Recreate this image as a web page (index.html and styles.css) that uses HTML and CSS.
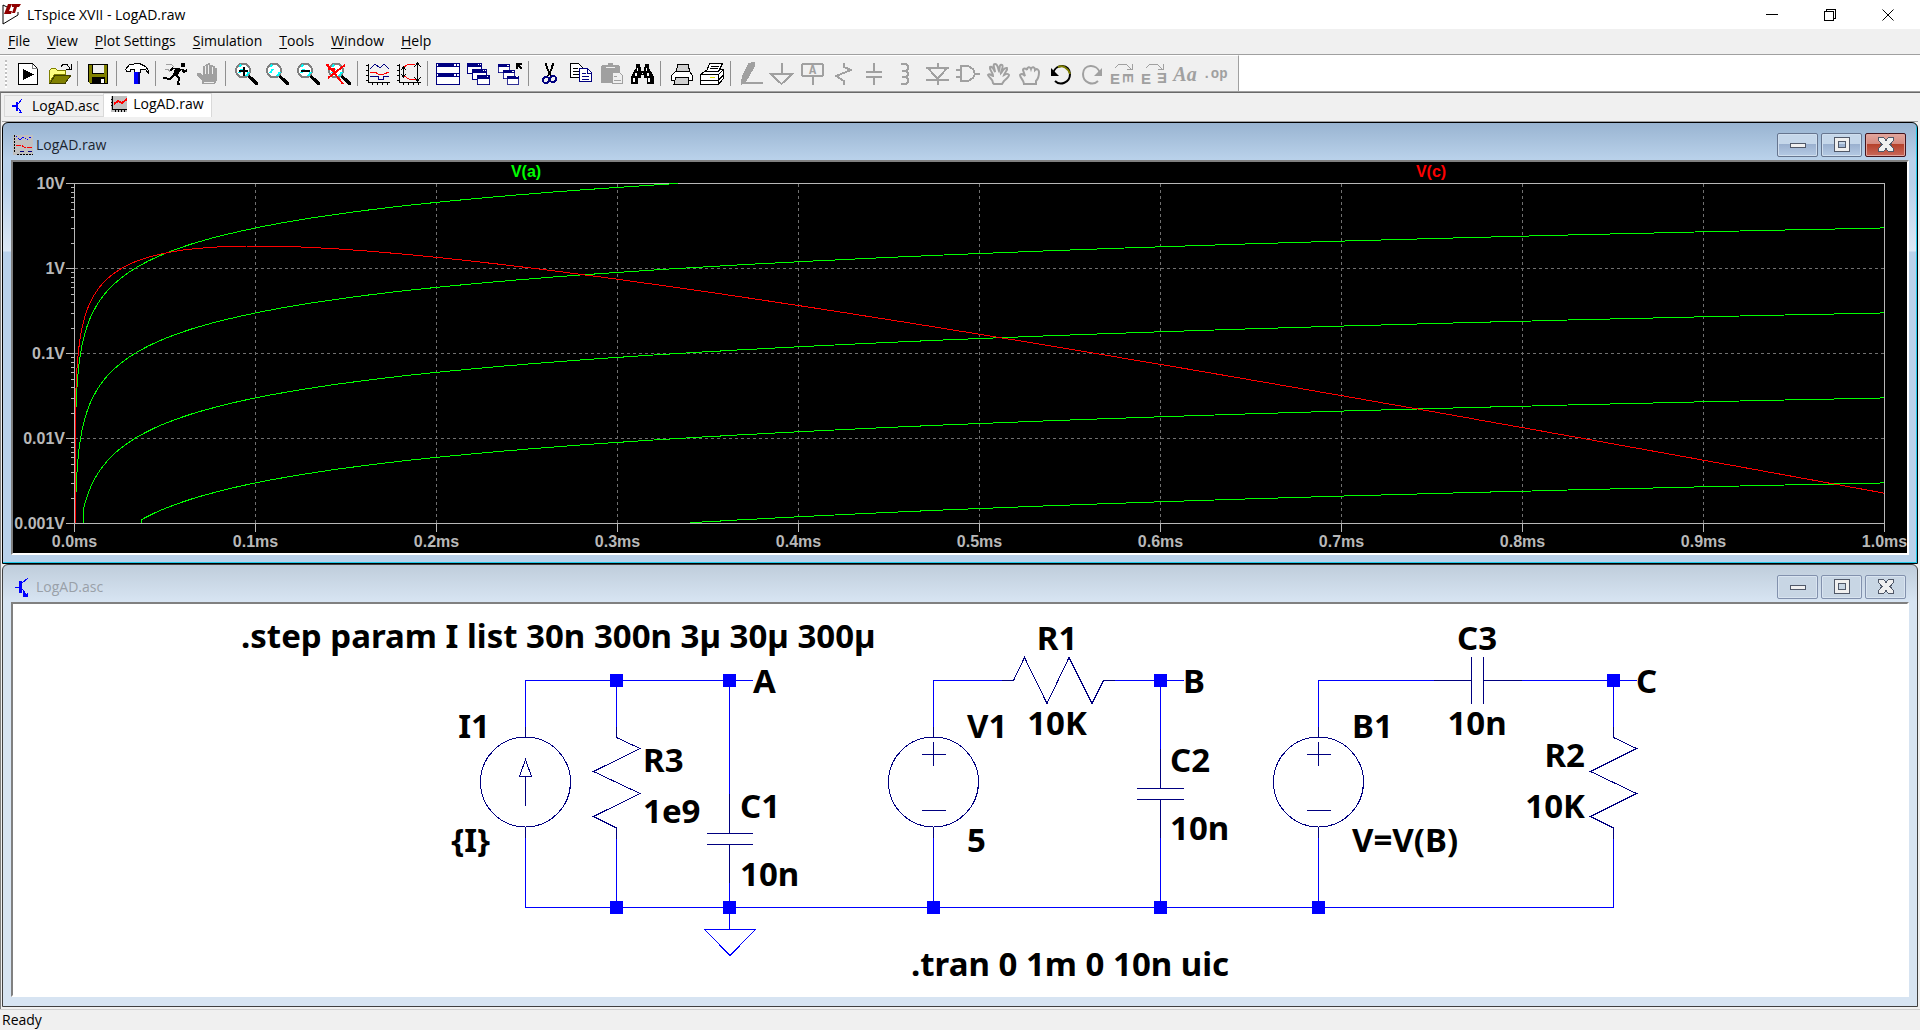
FILE: index.html
```
<!DOCTYPE html>
<html lang="en">
<head>
    <meta charset="UTF-8">
    <meta name="viewport" content="width=device-width, initial-scale=1.0">
    <title>LTspice XVII - LogAD.raw</title>
    <link rel="stylesheet" href="styles.css">
</head>
<body>
    <header class="titlebar">
        <svg class="app-icon" viewBox="0 0 20 21">
            <path d="M1 1v19l15-9v-3" fill="none" stroke="#000"/>
            <path d="M1 1l6 3" stroke="#000"/>
            <path d="M6 0h4l-3 7h3l-1 3H2zM10 0h9l-2 3h-2l-2 6h-3l2-6h-2z" fill="#900000"/>
        </svg>
        <h1>LTspice XVII - LogAD.raw</h1>
        <div class="caption">
            <button aria-label="Minimize"><svg viewBox="0 0 12 12"><path d="M0 5.5h12"/></svg></button>
            <button aria-label="Restore"><svg viewBox="0 0 12 12"><path d="M.5 2.5h9v9h-9zM2.5 2V.5h9v9H10"/></svg></button>
            <button aria-label="Close"><svg class="smooth" viewBox="0 0 12 12"><path d="M.5.5l11 11M11.5.5l-11 11"/></svg></button>
        </div>
    </header>

    <nav class="menu">
        <button><u>F</u>ile</button>
        <button><u>V</u>iew</button>
        <button><u>P</u>lot Settings</button>
        <button><u>S</u>imulation</button>
        <button><u>T</u>ools</button>
        <button><u>W</u>indow</button>
        <button><u>H</u>elp</button>
    </nav>

    <!-- shared icon parts -->
    <svg class="defs" aria-hidden="true">
        <symbol id="lens" viewBox="0 0 31 24">
            <path d="M17 13l2 1 7 6v2h-2l-7-7z" fill="#000" stroke="#000"/>
            <circle cx="12" cy="8.500" r="7" fill="#fff" stroke="#808080" stroke-width="2"/>
            <path d="M8 5l2-2M15 14l3-4M8 11l3-4" stroke="#0ff" stroke-width="2"/>
        </symbol>
        <symbol id="miniwin" viewBox="0 0 15 11">
            <path d="M.5.5h14v10H.5z" fill="#fff" stroke="#000080"/>
            <path d="M0 0h15v4H0z" fill="#000080"/>
            <path d="M11 1h1v1h-1zM13 1h1v1h-1z" fill="#fff"/>
        </symbol>
    </svg>

    <div class="toolbar-row">
        <div class="toolbar">
            <button aria-label="New schematic"><svg viewBox="0 0 31 24"><path d="M5.500 1.500h14l5 5v16h-19z" fill="#fff" stroke="#000"/><path d="M19.500 1.500v5h5" fill="none" stroke="#808080"/><path d="M10 7l11 5.500L10 18z"/></svg></button>
            <button aria-label="Open"><svg viewBox="0 0 31 24"><path d="M5.500 21V8.500l2-2h4l2 2h8V12h-11z" fill="#ffff80" stroke="#808000"/><path d="M6 21.500L11 13h16l-6 8.500z" fill="#808000" stroke="#404000"/><path d="M17 4.500l2-2h4l3 4M27 2v5h-5" fill="none" stroke="#000"/></svg></button>
            <span class="sep"></span>
            <button aria-label="Save"><svg viewBox="0 0 31 24"><path d="M5 2h20v20H7l-2-2z" fill="#000"/><path d="M6 3h3v9h12V3h3v18H6z" fill="#808000"/><path d="M10 3h11v8H10z" fill="#efefef"/><path d="M9 15h13v7H9z"/><path d="M18 17h3v4h-3z" fill="#fff"/></svg></button>
            <span class="sep"></span>
            <button aria-label="Control panel"><svg viewBox="0 0 31 24"><path d="M3.500 7.500l4-5 10-1 6 3 3 4v3l-3-4h-5v3h-6v-3H8v2H5z" fill="#fff" stroke="#000"/><path d="M12 10h6v12h-6z" fill="#00f"/><path d="M16 10h2v12h-2z" fill="#000080"/></svg></button>
            <span class="sep"></span>
            <button aria-label="Run"><svg viewBox="0 0 31 24"><path d="M20 1h4v4h-4z"/><path d="M11 6h5l5 1-5 7-4-2 2-5z"/><path d="M21 7l2 3 3-2M12 6l-3 3M14 12l4 4-1 6h2M13 13l-4 4-6-1v1" fill="none" stroke="#000" stroke-width="2"/><path d="M5 2h5l3 3M4 7h3l2 3" fill="none" stroke="#a0a0a0"/></svg></button>
            <button aria-label="Halt"><svg viewBox="0 0 31 24"><path d="M10 22v-3l-5-6v-2h3l3 3V4h2l1-2h2v-1h2v2h3v1h2v2h2v12l-2 4z" fill="#a0a0a0"/><path d="M13.500 4v8M16.500 3v9M20.500 5v7M12 20h10" stroke="#efefef"/></svg></button>
            <span class="sep"></span>
            <button aria-label="Zoom in"><svg viewBox="0 0 31 24"><use href="#lens"/><path d="M8 9h9M12.500 4.500v9" stroke="#000" stroke-width="2"/></svg></button>
            <button aria-label="Pan"><svg viewBox="0 0 31 24"><use href="#lens"/></svg></button>
            <button aria-label="Zoom out"><svg viewBox="0 0 31 24"><use href="#lens"/><path d="M8 9h9" stroke="#000" stroke-width="2"/></svg></button>
            <button aria-label="Zoom full extents"><svg viewBox="0 0 31 24"><use href="#lens"/><path d="M3 2l16 20M21 3L4 16" stroke="#f00" stroke-width="2"/><path d="M3 3l8 8M4 7h6v6" fill="none" stroke="#f00" stroke-width="2"/></svg></button>
            <span class="sep"></span>
            <button aria-label="Autorange"><svg viewBox="0 0 31 24"><path d="M5.500 2v18.500H27M3 3h2M3 8h2M3 13h2M3 18h2M9 20v3M14 20v3M19 20v3M24 20v3" fill="none" stroke="#000"/><path d="M7 7l5-5 5 4 4-4 5 5" fill="none" stroke="#000080"/><path d="M7 10h5l3 2h6l5-2" fill="none" stroke="#f00"/><path d="M7 14.500h8v3h5v-3h6" fill="none" stroke="#000080"/></svg></button>
            <button aria-label="Pick visible traces"><svg viewBox="0 0 31 24"><path d="M5.500 2v18.500H27M3 3h2M3 8h2M3 13h2M3 18h2M9 20v3M14 20v3M19 20v3M24 20v3M9.500 6v8M7 8l2.500-3L12 8M7 12l2.500 3 2.500-3M23.500 2v16M20 5l3.500-4L27 5M20 15l3.500 4 3.500-4" fill="none" stroke="#000"/><path d="M10 5l5-3h6M10 14l5 3 7 1" fill="none" stroke="#f00"/></svg></button>
            <span class="sep"></span>
            <button aria-label="Tile windows"><svg viewBox="0 0 31 24"><path d="M3.500 1.500h23v21h-23z" fill="#fff" stroke="#000080"/><path d="M3 1h24v4H3zM3 11h24v4H3z" fill="#000080"/><path d="M21 2h2v2h-2zM24 2h2v2h-2zM21 12h2v2h-2zM24 12h2v2h-2zM4 2h1v2H4zM4 12h1v2H4z" fill="#fff"/></svg></button>
            <button aria-label="Cascade windows"><svg viewBox="0 0 31 24"><use href="#miniwin" x="3" y="1" width="15" height="11"/><use href="#miniwin" x="8" y="7" width="15" height="11"/><use href="#miniwin" x="12" y="13" width="15" height="10"/></svg></button>
            <button aria-label="Close all windows"><svg viewBox="0 0 31 24"><use href="#miniwin" x="3" y="1" width="12" height="11"/><use href="#miniwin" x="8" y="7" width="12" height="11"/><use href="#miniwin" x="12" y="13" width="12" height="10"/><path d="M21.500 7V1.500H27M22 2l5 5" fill="none" stroke="#000" stroke-width="2"/></svg></button>
            <span class="sep"></span>
            <button aria-label="Cut"><svg viewBox="0 0 31 24"><path d="M12 1l1 5 4 8M19 1l-1 5-4 8" fill="none" stroke="#000" stroke-width="2"/><circle cx="12" cy="18" r="3" fill="none" stroke="#000080" stroke-width="2"/><circle cx="19" cy="17" r="3" fill="none" stroke="#000080" stroke-width="2"/></svg></button>
            <button aria-label="Copy"><svg viewBox="0 0 31 24"><path d="M5.500 1.500h8l4 4v10h-12z" fill="#fff" stroke="#000"/><path d="M8 6h5M8 9h7M8 12h7" stroke="#000"/><path d="M14.500 6.500h8l4 4v9h-12z" fill="#fff" stroke="#000080"/><path d="M17 11h4M17 14h7M17 17h7M22.500 7v4H26" fill="none" stroke="#000080"/></svg></button>
            <button aria-label="Paste" disabled><svg viewBox="0 0 31 24"><path d="M5 4l2-1h5V1h5v2h5l2 1v17H5z" fill="#a0a0a0"/><path d="M10 5.500h9" stroke="#efefef"/><path d="M16.500 10.500h7l3 3v8h-10z" fill="#efefef" stroke="#a0a0a0"/><path d="M18 14.500h3M18 18.500h7" stroke="#a0a0a0"/></svg></button>
            <button aria-label="Find"><svg viewBox="0 0 31 24"><path d="M9 2h4v3h1v4h3V5h1V2h4v4l3 5 2 4v7h-7v-6h-3v-3h-3v3h-3v6H4v-7l2-4 3-5z"/><path d="M10 6h1v3h-1zM19 6h1v3h-1zM8 11h2v3H8zM20 11h2v3h-2zM6 16h2v4H6zM21 16h2v4h-2zM15 11h1v1h-1z" fill="#fff"/></svg></button>
            <span class="sep"></span>
            <button aria-label="Print preview"><svg viewBox="0 0 31 24"><path d="M10.500 10.500l1-8h11l1 8z" fill="#d0d0d0" stroke="#000"/><path d="M5.500 13.500l4-4h14l3 4v5h-21z" fill="#fff" stroke="#000"/><path d="M9.500 15.500h13v7H8z" fill="#d0d0d0" stroke="#000"/></svg></button>
            <button aria-label="Print"><svg viewBox="0 0 31 24"><path d="M3.500 12.500l7-5h16v9l-5 6h-18z" fill="#fff" stroke="#000"/><path d="M3.500 12.500h18l5-5M21.500 12.500v10M4 18.500h17l5-5" fill="none" stroke="#000"/><path d="M9.500 9.500l3-8h13l-4 8z" fill="#fff" stroke="#000"/><path d="M14 4.500h8M13 6.500h8" stroke="#000"/><path d="M13 15.500h5" stroke="#e0e000"/></svg></button>
            <span class="sep"></span>
            <button aria-label="Wire" disabled><svg class="dim" viewBox="0 0 31 24"><path d="M13 2l5-1v3l-8 14-4 3 1-7z" fill="#a0a0a0"/><path d="M6 20.500h21"/></svg></button>
            <button aria-label="Ground" disabled><svg class="dim" viewBox="0 0 31 24"><path d="M14.500 1v10M4 12h21L14.500 22z"/></svg></button>
            <button aria-label="Label net" disabled><svg class="dim" viewBox="0 0 31 24"><path d="M5 2h19l1 1v10l-1 1H5l-1-1V3zM14.500 15v8"/><text x="14.500" y="12" class="ico-label">A</text></svg></button>
            <button aria-label="Resistor" disabled><svg class="dim" viewBox="0 0 31 24"><path d="M15 1v4l7 3L7 14l8 5v4"/></svg></button>
            <button aria-label="Capacitor" disabled><svg class="dim" viewBox="0 0 31 24"><path d="M14 1v8M6 10h16M6 15h16M14 15v8"/></svg></button>
            <button aria-label="Inductor" disabled><svg class="dim" viewBox="0 0 31 24"><path d="M10 2h5l2 2v3l-2 2h-4 4l2 2v2l-2 2h-4 4l2 2v3l-2 2h-5"/></svg></button>
            <button aria-label="Diode" disabled><svg class="dim" viewBox="0 0 31 24"><path d="M4 6h23M6 6l9.500 11L25 6M4 18h23M16 1v5M16 18v5"/></svg></button>
            <button aria-label="Component" disabled><svg class="dim" viewBox="0 0 31 24"><path d="M8 4h7l5 3 2 5-2 4-5 3H8zM3 8h5M3 15h5M22 12h5"/></svg></button>
            <button aria-label="Move" disabled><svg class="dim smooth" viewBox="0 0 31 24"><path d="M9 21c0-4-4-5-5-8 2-2 4 1 5 1 0-4-4-6-3-9 3-1 4 3 5 5 0-3-3-8 0-8s3 5 4 7c1-3 0-7 3-6 2 1-1 6-1 8 2-2 3-6 6-5 1 2-2 4-3 7 2-1 4-2 5 0 0 2-3 4-5 6l-2 3h-8z"/></svg></button>
            <button aria-label="Drag" disabled><svg class="dim smooth" viewBox="0 0 31 24"><path d="M9 22c0-4-4-6-4-9 1-2 3-1 5 1l-2-6c0-2 3-2 4 0 0-3 3-4 4-1 1-3 4-2 4 1 2-2 4 0 4 2 0 5-1 7-3 9v3z"/></svg></button>
            <button aria-label="Undo"><svg class="smooth" viewBox="0 0 31 24"><path d="M7 11C10 1 24 2 24 12c0 9-10 12-15 7" fill="none" stroke="#000" stroke-width="2"/><path d="M12 5c5-2 10 1 12 7" fill="none" stroke="#808000" stroke-width="2"/><path d="M5 6v8h8z"/></svg></button>
            <button aria-label="Redo" disabled><svg class="dim smooth" viewBox="0 0 31 24"><path d="M23 11C20 1 6 2 6 12c0 9 10 12 15 7"/><path d="M25 6v8h-8z" fill="#a0a0a0" stroke="none"/></svg></button>
            <button aria-label="Rotate" disabled><svg class="dim thin" viewBox="0 0 31 24"><path d="M7 6l4-4h7l5 5M19 7h5V2"/><text x="2" y="22" class="ico-e">E</text><text transform="translate(15 11) rotate(90)" class="ico-e">E</text></svg></button>
            <button aria-label="Mirror" disabled><svg class="dim thin" viewBox="0 0 31 24"><path d="M7 6l4-4h7l5 5M19 7h5V2"/><text x="2" y="22" class="ico-e">E</text><text transform="translate(28 11) rotate(180)" class="ico-e">E</text></svg></button>
            <button aria-label="Text" disabled><svg class="dim" viewBox="0 0 31 24"><text x="15" y="19" class="ico-aa">Aa</text></svg></button>
            <button aria-label="SPICE directive" disabled><svg class="dim" viewBox="0 0 31 24"><text x="14" y="16" class="ico-op">.op</text></svg></button>
        </div>
    </div>

    <main class="mdi">
        <div class="tabs">
            <button class="tab">
                <svg viewBox="0 0 16 16"><path d="M1 8h5" stroke="#00f" stroke-width="2"/><path d="M5 4h2v9H5z" fill="#00f"/><path d="M7 6l4-5M7 10l4 5M8 14h3" fill="none" stroke="#00f"/></svg>
                LogAD.asc
            </button>
            <button class="tab active">
                <svg viewBox="0 0 16 16"><path d="M0 0h16v16H0z" fill="#c0c0c0"/><path d="M1.500 0v13.500H16M4 14v2M7 14v2M10 14v2M13 14v2M0 3h1M0 6h1M0 9h1" fill="none" stroke="#000"/><path d="M3 8l4-3 4 2 5-4" fill="none" stroke="#f00" stroke-width="2"/></svg>
                LogAD.raw
            </button>
        </div>

        <section class="window focused">
            <div class="window-title">
                <svg viewBox="0 0 20 20"><path d="M0 0h20v20H0z" fill="#c0c0c0"/><path d="M1.500 0v17M4 19h16" fill="none" stroke="#000" stroke-dasharray="2 1"/><path d="M3 1l4 4 4-3 3 3 5-4" fill="none" stroke="#00f" stroke-dasharray="2 1"/><path d="M3 10h5l3 2h8" fill="none" stroke="#f00" stroke-dasharray="5 1"/><path d="M7 16h4M15 16h4" stroke="#000080"/></svg>
                <h2>LogAD.raw</h2>
                <button aria-label="Minimize"><svg viewBox="0 0 20 16"><path d="M2.500 6.500h15v4h-15z"/></svg></button>
                <button aria-label="Maximize"><svg viewBox="0 0 20 16"><path fill-rule="evenodd" d="M2.500.5h15v14h-15zM6.500 4.500v6h7v-6z"/></svg></button>
                <button class="close" aria-label="Close"><svg viewBox="0 0 20 16"><path d="M2.500.5h5l2.500 3 2.500-3h5v3L14 7.500l3.500 4v3h-5l-2.500-3-2.500 3h-5v-3L6 7.500l-3.500-4z"/></svg></button>
            </div>
            <div class="client">
                <!-- grid, traces and axis labels are filled in by plot.js -->
                <svg id="plot" class="plot" viewBox="13 162 1894 391"></svg>
            </div>
        </section>

        <section class="window">
            <div class="window-title">
                <svg viewBox="0 0 20 20"><path d="M2 10h5" stroke="#00f"/><path d="M6 4h3v12H6z" fill="#00f"/><path d="M9 6l6-5M9 12l3 3" fill="none" stroke="#00f"/><path d="M10 14l3 3 2-2v5h-5z" fill="#00f"/></svg>
                <h2>LogAD.asc</h2>
                <button aria-label="Minimize"><svg viewBox="0 0 20 16"><path d="M2.500 6.500h15v4h-15z"/></svg></button>
                <button aria-label="Maximize"><svg viewBox="0 0 20 16"><path fill-rule="evenodd" d="M2.500.5h15v14h-15zM6.500 4.500v6h7v-6z"/></svg></button>
                <button class="close" aria-label="Close"><svg viewBox="0 0 20 16"><path d="M2.500.5h5l2.500 3 2.500-3h5v3L14 7.500l3.500 4v3h-5l-2.500-3-2.500 3h-5v-3L6 7.500l-3.500-4z"/></svg></button>
            </div>
            <div class="client">
                <svg class="schematic" viewBox="13 604 1894 391">
                    <!-- wires -->
                    <g class="wire">
                        <path d="M525.500 727V680.500H753M616.500 680v47M729.500 680v130M525.500 838v69.500H1613.500V839M616.500 839v68M729.500 867v62.500M933.500 838v69M704.500 929.500h51l-25.500 26z"/>
                        <path d="M933.500 727V680.500H1002M1115 680.500h69M1160.500 680v86M1160.500 822v85"/>
                        <path d="M1318.500 727V680.500H1434M1521 680.500h116M1613.500 680v47M1318.500 838v69"/>
                    </g>
                    <!-- symbols -->
                    <g class="symbol">
                        <circle cx="525.500" cy="782" r="45"/>
                        <path d="M525.500 727v10M525.500 827v11M525.500 806V776.500M519.500 776.500h12l-6-17z"/>
                        <path d="M616.500 727v10.500l23.500 11-46.500 23 46.500 22-46.500 23 23 11.500v11"/>
                        <path d="M729.500 794v39.500M707 833.500h46M707 844.500h46M729.500 844.500V883"/>
                        <circle cx="933.500" cy="782" r="45"/>
                        <path d="M933.500 727v10M933.500 827v11M922 754.500h24M933.500 742v24M922 810.500h24"/>
                        <path d="M1002 680.500h11.500l11-23 22.500 46 22-46 23 46 11.500-23H1115"/>
                        <path d="M1160.500 749v39.500M1137 788.500h47M1137 799.500h47M1160.500 799.500V838"/>
                        <circle cx="1318.500" cy="782" r="45"/>
                        <path d="M1318.500 727v10M1318.500 827v11M1307 754.500h24M1318.500 742v24M1307 810.500h24"/>
                        <path d="M1434 680.500h37.500M1471.500 657v47M1483.500 657v47M1483.500 680.500H1522"/>
                        <path d="M1613.500 727v10.500l23 11-46 23 46 22-46 23 23 11.500v11"/>
                    </g>
                    <!-- junctions -->
                    <path class="junction" d="M610 674h13v13h-13zM723 674h13v13h-13zM1154 674h13v13h-13zM1607 674h13v13h-13zM610 901h13v13h-13zM723 901h13v13h-13zM927 901h13v13h-13zM1154 901h13v13h-13zM1312 901h13v13h-13z"/>
                    <text x="241" y="648">.step param I list 30n 300n 3µ 30µ 300µ</text>
                    <text x="911" y="976">.tran 0 1m 0 10n uic</text>
                    <text x="490" y="738" class="end">I1</text>
                    <text x="490" y="852" class="end">{I}</text>
                    <text x="643" y="772">R3</text>
                    <text x="643" y="823">1e9</text>
                    <text x="740" y="818">C1</text>
                    <text x="740" y="886">10n</text>
                    <text x="753" y="693">A</text>
                    <text x="967" y="738">V1</text>
                    <text x="967" y="852">5</text>
                    <text x="1057" y="650" class="mid">R1</text>
                    <text x="1057" y="735" class="mid">10K</text>
                    <text x="1183" y="693">B</text>
                    <text x="1170" y="772">C2</text>
                    <text x="1170" y="840">10n</text>
                    <text x="1352" y="738">B1</text>
                    <text x="1352" y="852">V=V(B)</text>
                    <text x="1477" y="650" class="mid">C3</text>
                    <text x="1477" y="735" class="mid">10n</text>
                    <text x="1585" y="767" class="end">R2</text>
                    <text x="1585" y="818" class="end">10K</text>
                    <text x="1636" y="693">C</text>
                </svg>
            </div>
        </section>
    </main>

    <footer class="status">Ready</footer>
    <script src="plot.js"></script>
</body>
</html>
```
FILE: styles.css
```
* {
    box-sizing: border-box;
}

body {
    margin: 0;
    min-height: 100vh;
    display: flex;
    flex-direction: column;
    background: #f0f0f0;
    color: #000;
    font-family: "Open Sans", sans-serif;
    font-size: 14px;
    line-height: 20px;
}

button {
    border: 0;
    padding: 0;
    margin: 0;
    background: none;
    color: inherit;
    font: inherit;
}

svg {
    display: block;
    shape-rendering: crispEdges;
}

.smooth {
    shape-rendering: auto;
}

.defs {
    position: absolute;
    width: 0;
    height: 0;
}

/* main title bar */
.titlebar {
    display: flex;
    align-items: center;
    height: 29px;
    padding-left: 2px;
    background: #fff;
}

.app-icon {
    width: 20px;
    height: 21px;
    shape-rendering: auto;
}

.titlebar h1 {
    flex: 1;
    margin: 0 0 0 5px;
    font-size: 14px;
    font-weight: normal;
}

.caption {
    display: flex;
    gap: 46px;
    padding-right: 26px;
}

.caption svg {
    width: 12px;
    height: 12px;
    fill: none;
    stroke: #000;
}

.menu {
    display: flex;
    gap: 17px;
    height: 25px;
    padding: 0 8px 2px;
}

.menu u {
    text-underline-offset: 2px;
}

/* toolbar */
.toolbar-row {
    border-top: 1px solid #a0a0a0;
    border-bottom: 1px solid #a0a0a0;
    background: #fff;
}

.toolbar {
    display: flex;
    align-items: center;
    width: fit-content;
    height: 36px;
    padding: 0 6px 0 5px;
    border-top: 1px solid #fff;
    border-right: 1px solid #a0a0a0;
    background: #f0f0f0;
}

.toolbar::before {
    content: "";
    width: 2px;
    height: 28px;
    margin-right: 6px;
    background: repeating-linear-gradient(#c0c0c0 0 2px, #fff 2px 4px);
}

.toolbar button svg {
    width: 31px;
    height: 24px;
}

.sep {
    width: 1px;
    height: 25px;
    margin: 0 5px 0 2px;
    background: #909090;
}

.dim {
    fill: none;
    stroke: #a0a0a0;
    stroke-width: 2;
}

.thin {
    stroke-width: 1;
}

.smooth.dim {
    stroke-width: 2;
}

.dim text {
    fill: #a0a0a0;
    stroke: none;
    font-weight: bold;
}

.ico-label {
    font-family: "Liberation Mono", monospace;
    font-size: 12px;
    text-anchor: middle;
}

.ico-e {
    font-family: "Liberation Sans", sans-serif;
    font-size: 15px;
}

.ico-aa {
    font-family: "Liberation Serif", serif;
    font-size: 20px;
    font-style: italic;
    text-anchor: middle;
}

.ico-op {
    font-family: "Liberation Mono", monospace;
    font-size: 14px;
    text-anchor: middle;
}

/* document area */
.mdi {
    flex: 1;
    padding: 0 2px 2px 1px;
    border-top: 1px solid #696969;
    border-left: 1px solid #808080;
}

.tabs {
    display: flex;
    align-items: flex-end;
    height: 29px;
    padding: 0 2px 4px;
    border-bottom: 1px solid #a0a0a0;
}

.tab {
    display: flex;
    align-items: center;
    gap: 5px;
    height: 22px;
    padding: 0 4px 0 6px;
    border: 1px solid #d9d9d9;
    border-right: 0;
    font-size: 14px;
}

.tab.active {
    gap: 6px;
    height: 24px;
    padding: 0 7px 4px 7px;
    border-right: 1px solid #d9d9d9;
    border-bottom: 0;
    background: #fff;
}

.tab svg {
    width: 16px;
    height: 16px;
}

/* child windows */
.window {
    padding: 2px 8px 9px;
    border: 1px solid #404040;
    border-radius: 6px 6px 0 0;
    background: linear-gradient(#bfcddb, #d7e4f2 36px);
    color: #99a0a8;
}

.window.focused {
    padding-bottom: 8px;
    border-color: #000;
    box-shadow: inset -1px -1px #20c8e8;
    background: linear-gradient(#99b4d1, #b9d1ea 36px, #b9d1ea 60px, #dce8f5 128px, #b9d1ea 129px);
    color: #1c2530;
}

.window-title {
    display: flex;
    align-items: center;
    gap: 3px;
    height: 35px;
    padding: 5px 3px 0 2px;
}

.window-title > svg {
    width: 20px;
    height: 20px;
}

.window-title h2 {
    flex: 1;
    margin: 0;
    font-size: 14px;
    font-weight: normal;
}

.window-title button {
    display: flex;
    align-items: center;
    justify-content: center;
    width: 41px;
    height: 24px;
    border: 1px solid #8291ad;
    border-radius: 2px;
    box-shadow: inset 0 0 0 1px #d9e4f0;
    background: #c8d6e4;
}

.focused .window-title button {
    border-color: #66758f;
    box-shadow: inset 0 0 0 1px #cfdeee;
    background: linear-gradient(#c5d7ea 0 45%, #9ab0cf 46%, #b5cae4);
}

.focused .window-title .close {
    border-color: #43131c;
    box-shadow: inset 0 0 0 1px #e0a49c;
    background: linear-gradient(#e2a69d 0, #d58a80 45%, #b5402a 46%, #c9685a);
}

.window-title button svg {
    width: 20px;
    height: 16px;
    fill: #f0f0f0;
    stroke: #505868;
}

.client {
    border: 2px solid;
    border-color: #808080 #fff #fff #808080;
}

.plot {
    width: 100%;
    background: #000;
}

.plot path {
    fill: none;
}

.plot text {
    fill: #b8b8b8;
    font: bold 16px "Liberation Sans", sans-serif;
    text-anchor: middle;
}

.plot .axis {
    stroke: #b8b8b8;
}

.plot .grid {
    stroke: #707070;
    stroke-dasharray: 3 3;
}

.plot .va {
    stroke: #0f0;
}

.plot .vc {
    stroke: #f00;
}

.plot .volts {
    text-anchor: end;
}

.plot .name-a {
    fill: #0f0;
}

.plot .name-c {
    fill: #f00;
}

.schematic {
    width: 100%;
    background: #fff;
}

.schematic text {
    fill: #000;
    font: bold 33px "Noto Sans", sans-serif;
}

.schematic .end {
    text-anchor: end;
}

.schematic .mid {
    text-anchor: middle;
}

.wire {
    fill: none;
    stroke: #00f;
}

.symbol {
    fill: none;
    stroke: #000080;
}

.junction {
    fill: #00f;
}

.status {
    height: 22px;
    padding-left: 2px;
    border-top: 1px solid #d0d0d0;
}
```
FILE: plot.js
```
// Draws the log-scale transient plot: 0..1ms across, 1mV..10V up
const plot = document.getElementById('plot');
const left = 74.5, right = 1884.5, top_ = 183.5, bottom = 523.5;
const decade = 85;

function add(name, cls, attrs, text) {
    const el = document.createElementNS('http://www.w3.org/2000/svg', name);
    if (cls) el.setAttribute('class', cls);
    for (const key in attrs) el.setAttribute(key, attrs[key]);
    if (text) el.textContent = text;
    plot.appendChild(el);
}

const xOf = t => left + t * (right - left);
const yOf = v => bottom - decade * Math.log10(v / 0.001);

// Grid and time labels
for (let i = 0; i <= 10; i++) {
    const x = xOf(i / 10);
    if (i > 0 && i < 10) add('path', 'grid', { d: `M${x} ${top_}V${bottom}` });
    add('path', 'axis', { d: `M${x} ${bottom}v8` });
    add('text', '', { x: x, y: 547 }, (i / 10).toFixed(1) + 'ms');
}

// Voltage labels and log ticks
['10V', '1V', '0.1V', '0.01V', '0.001V'].forEach((label, i) => {
    const y = top_ + i * decade;
    add('text', 'volts', { x: 65, y: y + 5.5 }, label);
    add('path', 'axis', { d: `M66 ${y}h8` });
    if (i > 0 && i < 4) add('path', 'grid', { d: `M${left} ${y}H${right}` });
    if (i === 4) return;
    for (let n = 2; n < 10; n++) {
        const tick = Math.round(y + decade - decade * Math.log10(n)) + 0.5;
        add('path', 'axis', { d: `M71 ${tick}h3` });
    }
});

add('path', 'axis', { d: `M${left} ${top_}H${right}V${bottom}H${left}z` });

// Trace of fn(t) from start to 1ms, stopping where it leaves the top
function trace(cls, fn, start, drop) {
    const points = [];
    if (drop) points.push(`${xOf(start)} ${bottom}`);
    let t = start;
    while (true) {
        const v = fn(t);
        if (v > 10) {
            points.push(`${xOf(1 / 3)} ${top_}`);
            break;
        }
        points.push(`${xOf(t).toFixed(1)} ${yOf(v).toFixed(1)}`);
        if (t >= 1) break;
        t = Math.min(1, t + (t < 0.05 ? 0.0005 : 0.005));
    }
    add('path', cls, { d: 'M' + points.join('L') });
}

// V(a) ramps at I/C for each stepped current
trace('va', t => 30 * t, 0.0007, false);
trace('va', t => 3 * t, 0.0007, false);
trace('va', t => 0.3 * t, 0.005, true);
trace('va', t => 0.03 * t, 0.037, true);
trace('va', t => 0.003 * t, 0.34, false);

// V(c) is the differentiated RC charge, tau = 0.1ms
trace('vc', t => 50 * t * Math.exp(-10 * t), 0.0007, true);

add('text', 'name-a', { x: 526, y: 177 }, 'V(a)');
add('text', 'name-c', { x: 1431, y: 177 }, 'V(c)');
```
